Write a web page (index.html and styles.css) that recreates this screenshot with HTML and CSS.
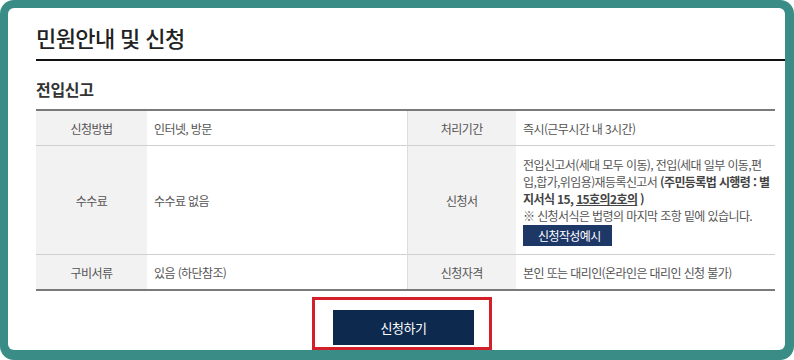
FILE: index.html
```html
<!DOCTYPE html>
<html lang="ko">
<head>
<meta charset="utf-8">
<link rel="stylesheet" href="styles.css">
</head>
<body>
<div class="frame">
  <div class="panel">
    <h1 class="title">민원안내 및 신청</h1>
    <h2 class="subtitle">전입신고</h2>
    <table class="info">
      <colgroup>
        <col class="c-th"><col class="c-td1"><col class="c-th2"><col>
      </colgroup>
      <tr class="r-short">
        <th>신청방법</th>
        <td>인터넷, 방문</td>
        <th class="th2">처리기간</th>
        <td>즉시(근무시간 내 3시간)</td>
      </tr>
      <tr>
        <th>수수료</th>
        <td>수수료 없음</td>
        <th class="th2">신청서</th>
        <td class="forms">전입신고서(세대 모두 이동), 전입(세대 일부 이동,편<br>입,합가,위임용)재등록신고서 <b>(주민등록법 시행령 : 별<br>지서식 15, <u>15호의2호의</u> )</b><br>※ 신청서식은 법령의 마지막 조항 밑에 있습니다.<br><span class="example">신청작성예시</span></td>
      </tr>
      <tr class="r-short">
        <th>구비서류</th>
        <td>있음 (하단참조)</td>
        <th class="th2">신청자격</th>
        <td>본인 또는 대리인(온라인은 대리인 신청 불가)</td>
      </tr>
    </table>
    <div class="actions">
      <div class="highlight">
        <span class="apply">신청하기</span>
      </div>
    </div>
  </div>
</div>
</body>
</html>
```

FILE: styles.css
```css
html, body {
  margin: 0;
  padding: 0;
  background: #ffffff;
}
body {
  font-family: "Noto Sans CJK KR", "Noto Sans", sans-serif;
  color: #555;
}
.frame {
  width: 794px;
  height: 360px;
  box-sizing: border-box;
  background: #3a8c87;
  border-radius: 14px;
  padding: 8px 9px 10px 8px;
  display: flex;
}
.panel {
  flex: 1;
  background: #fff;
  border-radius: 6px;
  padding-left: 28px;
  display: flex;
  flex-direction: column;
  overflow: hidden;
}
.title {
  margin: 0;
  padding-top: 14px;
  height: 39px;
  font-size: 22px;
  font-weight: 500;
  letter-spacing: -0.6px;
  line-height: 30px;
  color: #222;
  border-bottom: 2px solid #111;
}
.subtitle {
  margin: 0;
  padding-top: 17px;
  height: 32px;
  font-size: 16px;
  font-weight: 700;
  letter-spacing: -0.3px;
  line-height: 22px;
  color: #333;
}
.info {
  width: 739px;
  border-collapse: collapse;
  border-top: 2px solid #7a7a7a;
  border-bottom: 2px solid #7a7a7a;
  font-size: 12px;
  letter-spacing: -0.6px;
  table-layout: fixed;
}
.c-th { width: 111px; }
.c-td1 { width: 260px; }
.c-th2 { width: 109px; }
.info th, .info td {
  border-top: 1px solid #cfcfcf;
  padding: 0 7px;
  font-weight: 400;
  vertical-align: middle;
  line-height: 17px;
}
.info th {
  background: #f2f2f2;
  text-align: center;
  color: #555;
}
.info th.th2 {
  border-left: 1px solid #dcdcdc;
}
.info td {
  text-align: left;
  color: #555;
}
.r-short th, .r-short td {
  height: 34px;
}
.forms {
  padding-top: 10px !important;
  padding-bottom: 8px !important;
  white-space: nowrap;
}
.forms b {
  font-weight: 700;
  color: #444;
}
.example {
  display: inline-block;
  margin-top: 1px;
  background: #1d3767;
  color: #fff;
  height: 21px;
  line-height: 21px;
  padding: 0 11px 0 15px;
  font-size: 12px;
}
.actions {
  display: flex;
  justify-content: center;
  width: 739px;
  padding-top: 6px;
  padding-right: 7px;
  box-sizing: border-box;
}
.highlight {
  border: 3px solid #d3202b;
  padding: 10px 15px 2px 18px;
  height: 35px;
}
.apply {
  display: block;
  width: 141px;
  height: 35px;
  line-height: 35px;
  background: #0d2a4e;
  color: #fff;
  text-align: center;
  font-size: 13px;
  letter-spacing: -0.5px;
}
```
